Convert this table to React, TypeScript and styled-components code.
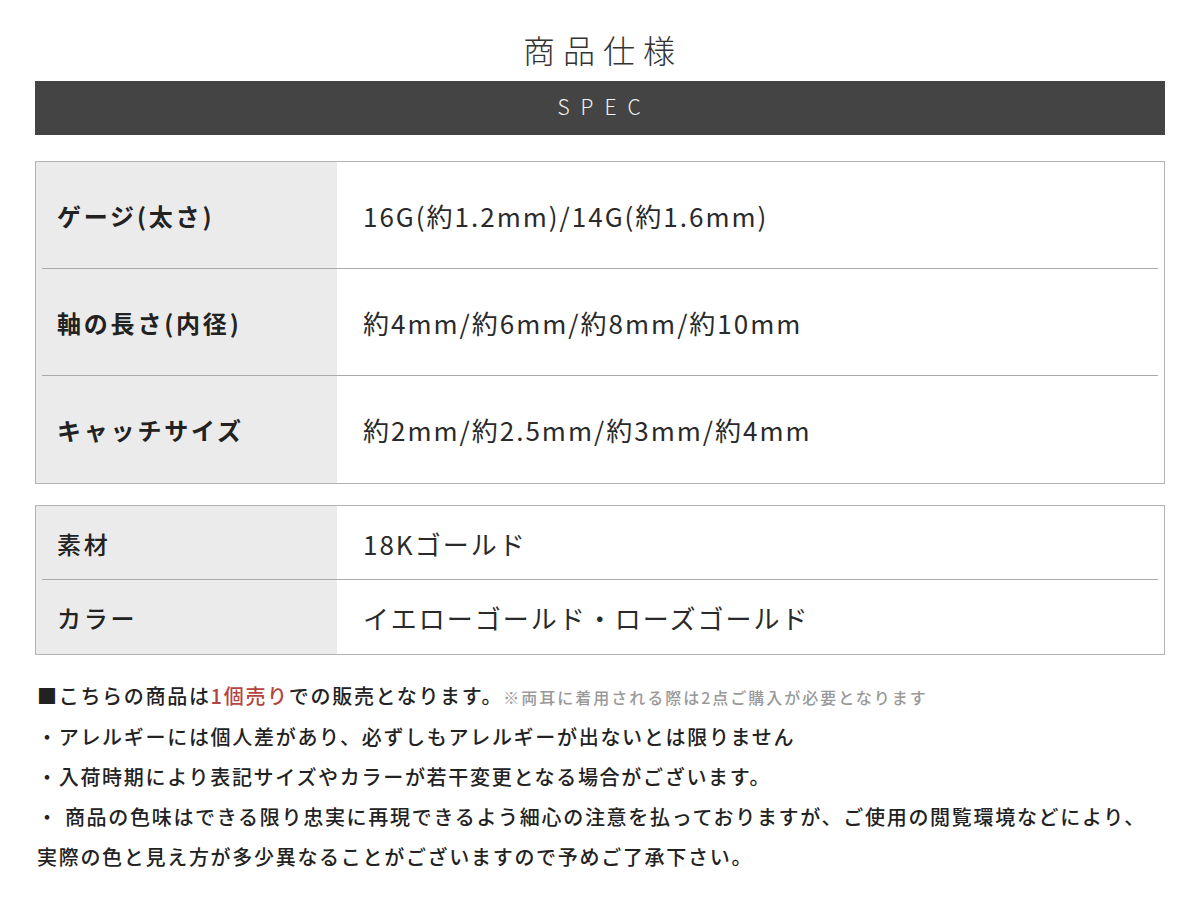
import React from "react";
import styled, { createGlobalStyle } from "styled-components";

const GlobalStyle = createGlobalStyle`
  html, body {
    margin: 0;
    padding: 0;
    background: #ffffff;
  }
  body {
    font-family: "Noto Sans CJK JP", "Noto Sans", sans-serif;
    color: #222;
  }
`;

const Page = styled.div`
  width: 1200px;
  padding: 0 35px;
  box-sizing: border-box;
`;

const Title = styled.h1`
  margin: 0;
  padding-top: 28px;
  height: 81px;
  box-sizing: border-box;
  text-align: center;
  font-size: 32px;
  line-height: 42px;
  font-weight: 300;
  letter-spacing: 8px;
  padding-left: 6px;
  color: #333;
`;

const Band = styled.div`
  height: 54px;
  box-sizing: border-box;
  padding-bottom: 4px;
  background: #444444;
  display: flex;
  align-items: center;
  justify-content: center;
  color: #f2f2f2;
  font-size: 21px;
  font-weight: 300;
  letter-spacing: 11px;
  padding-left: 9px;
`;

const Table = styled.div<{ $top: number }>`
  margin-top: ${(p) => p.$top}px;
  border: 1px solid #b3b3b3;
  display: flex;
  flex-direction: column;
`;

const Row = styled.div<{ $h: number; $last?: boolean }>`
  position: relative;
  display: flex;
  height: ${(p) => p.$h}px;
  &::after {
    content: "";
    display: ${(p) => (p.$last ? "none" : "block")};
    position: absolute;
    left: 6px;
    right: 6px;
    bottom: 0;
    height: 1px;
    background: #aaaaaa;
  }
`;

const Label = styled.div<{ $bold?: boolean }>`
  width: 301px;
  flex: none;
  background: #ebebeb;
  display: flex;
  align-items: center;
  padding-left: 21px;
  box-sizing: border-box;
  font-size: 24px;
  font-weight: ${(p) => (p.$bold ? 700 : 500)};
  letter-spacing: 2.8px;
  color: #222;
`;

const Value = styled.div`
  flex: 1;
  display: flex;
  align-items: center;
  padding-left: 26px;
  font-size: 26px;
  font-weight: 400;
  letter-spacing: 2px;
  color: #2a2a2a;
`;

const Notes = styled.div`
  margin-top: 21px;
  margin-left: 2px;
`;

const NoteLine = styled.p`
  margin: 0;
  font-size: 20px;
  line-height: 40px;
  font-weight: 500;
  letter-spacing: 1.7px;
  color: #222;
  white-space: nowrap;
`;

const Red = styled.span`
  color: #b3443f;
`;

const Small = styled.span`
  font-size: 16px;
  letter-spacing: 2px;
  color: #999;
  font-weight: 500;
`;

const spec1 = [
  { label: "ゲージ(太さ)", value: "16G(約1.2mm)/14G(約1.6mm)" },
  { label: "軸の長さ(内径)", value: "約4mm/約6mm/約8mm/約10mm" },
  { label: "キャッチサイズ", value: "約2mm/約2.5mm/約3mm/約4mm" },
];

const spec2 = [
  { label: "素材", value: "18Kゴールド" },
  { label: "カラー", value: "イエローゴールド・ローズゴールド" },
];

export default function App() {
  return (
    <>
      <GlobalStyle />
      <Page>
        <Title>商品仕様</Title>
        <Band>SPEC</Band>
        <Table $top={26}>
          {spec1.map((r, i) => (
            <Row key={r.label} $h={107} $last={i === spec1.length - 1}>
              <Label $bold>{r.label}</Label>
              <Value>{r.value}</Value>
            </Row>
          ))}
        </Table>
        <Table $top={21}>
          {spec2.map((r, i) => (
            <Row key={r.label} $h={74} $last={i === spec2.length - 1}>
              <Label>{r.label}</Label>
              <Value>{r.value}</Value>
            </Row>
          ))}
        </Table>
        <Notes>
          <NoteLine>
            ■こちらの商品は<Red>1個売り</Red>での販売となります。
            <Small>※両耳に着用される際は2点ご購入が必要となります</Small>
          </NoteLine>
          <NoteLine>・アレルギーには個人差があり、必ずしもアレルギーが出ないとは限りません</NoteLine>
          <NoteLine>・入荷時期により表記サイズやカラーが若干変更となる場合がございます。</NoteLine>
          <NoteLine>・ 商品の色味はできる限り忠実に再現できるよう細心の注意を払っておりますが、ご使用の閲覧環境などにより、</NoteLine>
          <NoteLine>実際の色と見え方が多少異なることがございますので予めご了承下さい。</NoteLine>
        </Notes>
      </Page>
    </>
  );
}
